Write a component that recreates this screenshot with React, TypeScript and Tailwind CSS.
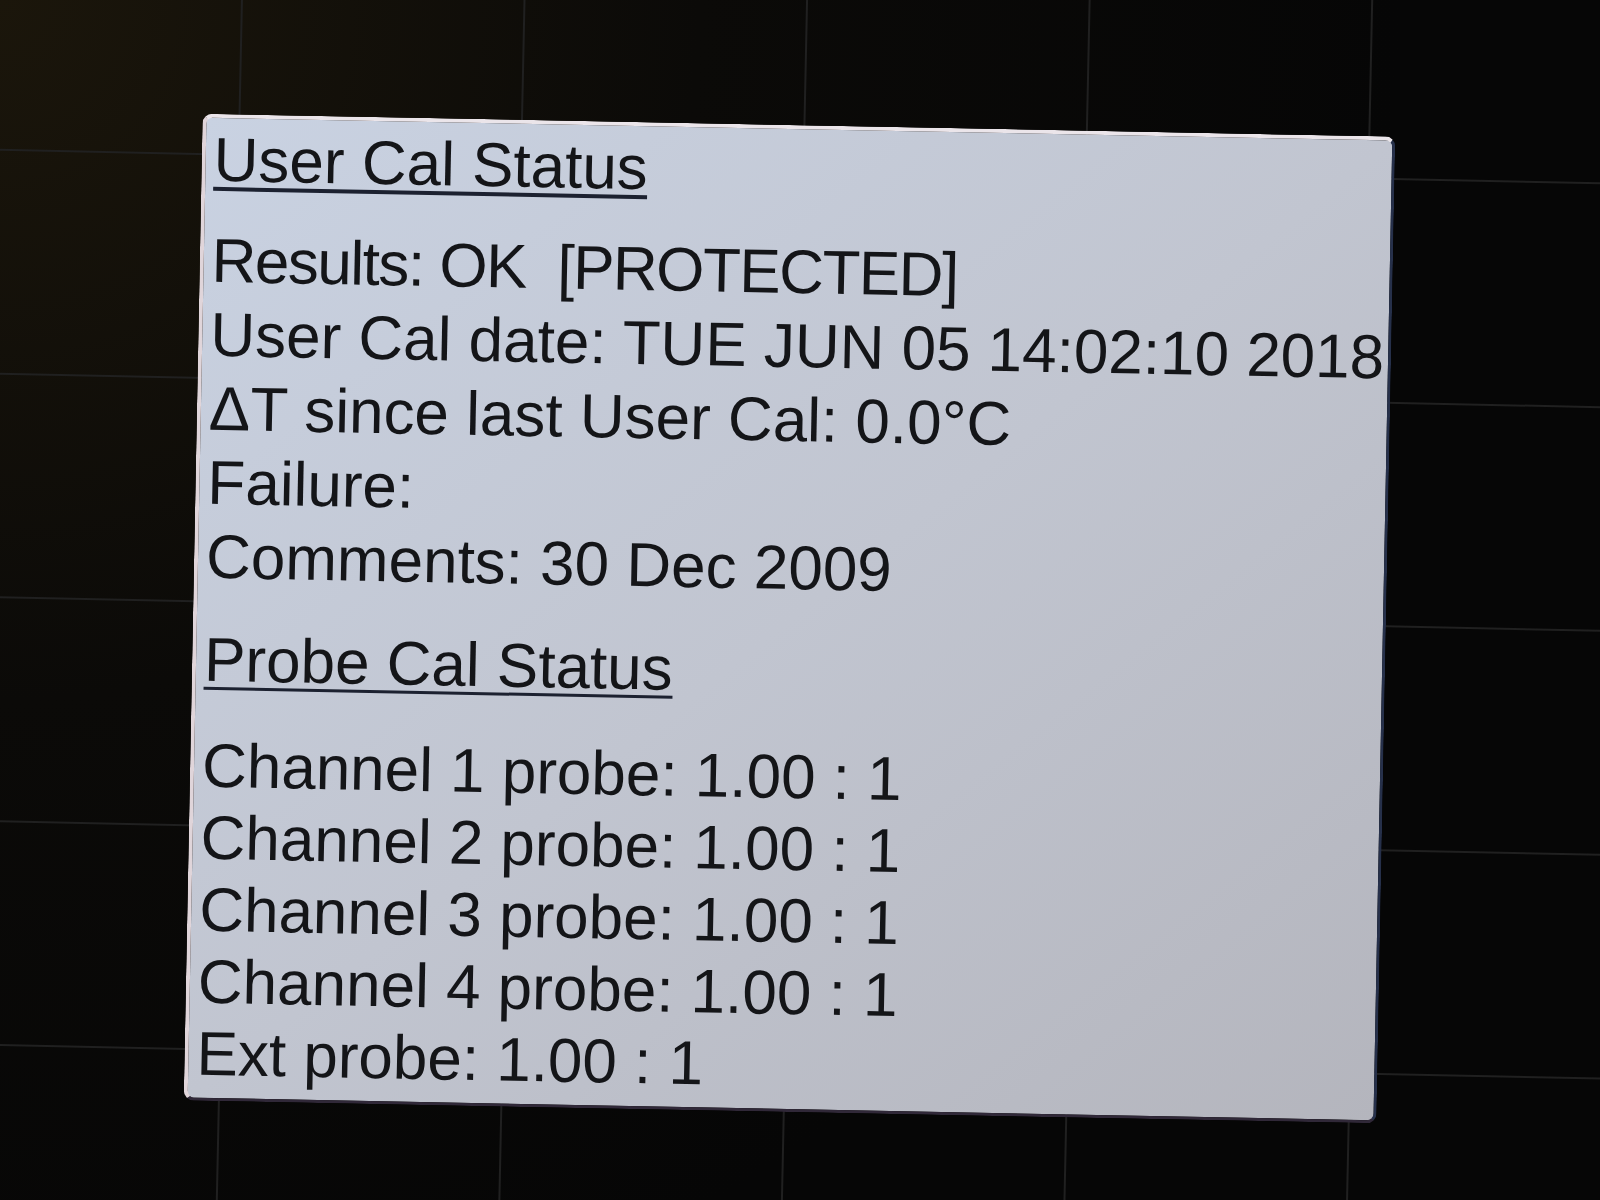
const userCalLines = [
  { text: 'Results: OK  [PROTECTED]', cls: 'tracking-[-1.5px]' },
  { text: 'User Cal date: TUE JUN 05 14:02:10 2018', cls: '' },
  { text: 'ΔT since last User Cal: 0.0°C', cls: '' },
  { text: 'Failure:', cls: '' },
  { text: 'Comments: 30 Dec 2009', cls: '' },
]

const probeLines = [
  'Channel 1 probe: 1.00 : 1',
  'Channel 2 probe: 1.00 : 1',
  'Channel 3 probe: 1.00 : 1',
  'Channel 4 probe: 1.00 : 1',
  'Ext probe: 1.00 : 1',
]

// scope graticule behind the dialog, tilted like the photo
const vLines = [-53, 229.5, 512, 794.5, 1077, 1359.5, 1642]
const hLines = [-57, 166.7, 390.5, 614, 838, 1061.7, 1285]

const Graticule = () => (
  <svg className="absolute inset-0" width="1600" height="1200" viewBox="0 0 1600 1200">
    <g transform="rotate(1.2 800 600)" stroke="#202020" strokeWidth="2">
      {vLines.map((x) => (
        <line key={`v${x}`} x1={x} y1={-200} x2={x} y2={1400} />
      ))}
      {hLines.map((y) => (
        <line key={`h${y}`} x1={-200} y1={y} x2={1800} y2={y} />
      ))}
    </g>
  </svg>
)

export default function App() {
  return (
    <div className="relative w-[1600px] h-[1200px] overflow-hidden bg-[#070707] bg-[radial-gradient(circle_at_0%_0%,#1b160b_0%,#0b0a08_35%,#060606_70%)]">
      <Graticule />
      <div className="relative pt-[125px] pl-[193px]">
        <div className="w-[1193px] h-[987px] rotate-[1.1deg] rounded-[10px] border-t-[4px] border-l-[4px] border-r-[3px] border-b-[3px] border-t-[#ebe5ea] border-l-[#e0d5da] border-r-[#26304a] border-b-[#302838] bg-linear-to-br from-[#c9d2e2] via-[#c1c5d0] to-[#b4b5bd] text-[#141518] font-['Liberation_Sans','Arial',sans-serif] text-[62px] whitespace-pre">
          <div className="flex flex-col items-start pl-[8px] pt-[13.5px]">
            <div className="leading-[55px] border-b-[4px] border-[#1c2130]">User Cal Status</div>
            <div className="mt-[33.5px] leading-[74px]">
              {userCalLines.map((line) => (
                <div key={line.text} className={line.cls}>
                  {line.text}
                </div>
              ))}
            </div>
            <div className="mt-[37.7px] leading-[55px] border-b-[3px] border-[#1c2130]">Probe Cal Status</div>
            <div className="mt-[40.6px] leading-[72px]">
              {probeLines.map((line) => (
                <div key={line}>{line}</div>
              ))}
            </div>
          </div>
        </div>
      </div>
    </div>
  )
}
